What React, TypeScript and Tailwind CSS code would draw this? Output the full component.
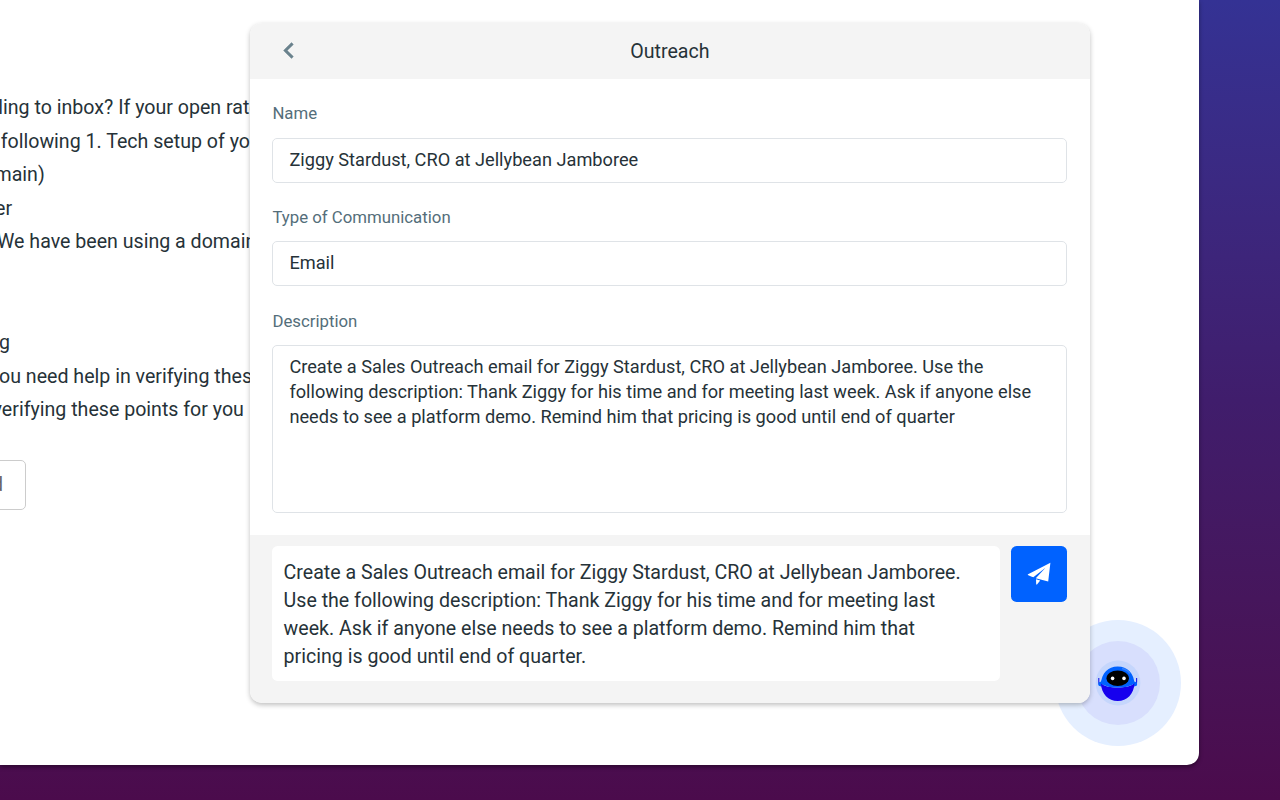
import React from 'react';

const description =
  'Create a Sales Outreach email for Ziggy Stardust, CRO at Jellybean Jamboree. Use the following description: Thank Ziggy for his time and for meeting last week. Ask if anyone else needs to see a platform demo. Remind him that pricing is good until end of quarter';

function Conversation() {
  return (
    <div className="w-[251px] shrink-0 overflow-hidden pt-[91px] text-[19.6px] leading-[33.6px] whitespace-nowrap">
      <p className="-ml-[6.5px]">lling to inbox? If your open rate</p>
      <p className="ml-[0.7px]">following 1. Tech setup of you</p>
      <p className="-ml-[5.5px]">main)</p>
      <p className="-ml-[5px]">er</p>
      <p className="-ml-[3px]">We have been using a domain</p>
      <p className="mt-[67.2px] -ml-[1px]">g</p>
      <p className="-ml-[1px]">ou need help in verifying these</p>
      <p className="-ml-[7.5px]">verifying these points for you</p>
      <div className="mt-[32.9px] -ml-[74px] flex h-[50px] w-[100px] items-center justify-end rounded-[5px] border border-[#ccc] pr-[22px] text-[#666]">
        Send
      </div>
    </div>
  );
}

function Field({ label, value }: { label: string; value: string }) {
  return (
    <div className="mb-[22.4px]">
      <label className="block h-[36.4px] text-[16.8px] leading-[25.2px] text-[#546e7a]">{label}</label>
      <div className="flex h-[44.8px] items-center rounded-[5px] border border-[#dfe3e7] px-[16px] pb-[2px] text-[18.2px]">
        {value}
      </div>
    </div>
  );
}

function SendIcon() {
  return (
    <svg viewBox="0 0 24 24" className="h-6 w-6" fill="white">
      <path d="M23.4 0.8 0.6 12.5Q1.5 13.8 6.3 15.3L18.5 5.8 8.8 16.2 21.2 19.6Z" />
      <path d="M9 17.2 13.2 18.5 10 22.4 9.2 22.4Z" />
    </svg>
  );
}

function Robot() {
  return (
    <div className="absolute top-[620.4px] left-[1054.7px] h-[126px] w-[126px]">
      <svg viewBox="0 0 126 126" className="h-full w-full">
        <circle cx="63" cy="63" r="63" fill="#e5efff" />
        <circle cx="63" cy="63" r="42" fill="#d8dffd" />
        <circle cx="63" cy="63" r="22.4" fill="#c5d6fc" />
        <path d="M43.8 58v4q0 4 4 4M81.6 58v4q0 4-4 4" fill="none" stroke="#1717e8" strokeWidth="1.1" />
        <circle cx="45.5" cy="64" r="2.3" fill="#0062ff" />
        <circle cx="79.9" cy="64" r="2.3" fill="#0062ff" />
        <path d="M45.9 64C46.4 53 53 46.4 62.7 46.4S79 53 79.5 64Z" fill="#0062ff" />
        <path d="M67 48.5q5.5 1.3 8 5" fill="none" stroke="#2f80ff" strokeWidth="1.5" />
        <path d="M45.9 63C50 69 75 69 79.5 63C79 74 72 81 62.7 81S46.4 74 45.9 63Z" fill="#1600ee" />
        <path d="M45.4 62.5C50 69.3 75 69.3 80 62.5L78 60H47Z" fill="#0062ff" />
        <ellipse cx="62.7" cy="58.3" rx="11.2" ry="7.7" fill="#000" />
        <circle cx="57.6" cy="58.4" r="1.8" fill="#fff" />
        <circle cx="69" cy="58.4" r="1.8" fill="#fff" />
      </svg>
    </div>
  );
}

export default function App() {
  return (
    <div className="relative h-[800px] w-[1280px] overflow-hidden bg-linear-to-b from-[#343294] via-[#401d6c] to-[#4b0b4c] font-[Roboto,sans-serif] text-[#263238]">
      <main className="flex h-[764.5px] w-[1198.7px] items-start rounded-br-[12px] bg-white shadow-[0_2px_4px_rgba(0,0,0,0.4)]">
        <Robot />
        <Conversation />
        <section className="relative mt-[23.4px] -ml-[1px] flex h-[679.6px] w-[839.8px] shrink-0 flex-col overflow-hidden rounded-[12px] bg-white shadow-[0_2px_5px_rgba(0,0,0,0.25)]">
          <header className="relative flex h-[55.6px] shrink-0 items-center justify-center bg-[#f4f4f4] pt-[2px] text-[19.6px]">
            <svg viewBox="0 0 11 17" className="absolute top-[19px] left-[33px] h-[17px] w-[11px]" fill="none" stroke="#6a828d" strokeWidth="3">
              <path d="M9.6 1.4 2.4 8.5l7.2 7.1" />
            </svg>
            Outreach
          </header>
          <div className="flex-1 pt-[22.4px] pr-[22.8px] pl-[22.4px]">
            <Field label="Name" value="Ziggy Stardust, CRO at Jellybean Jamboree" />
            <Field label="Type of Communication" value="Email" />
            <label className="block h-[36.4px] text-[16.8px] leading-[25.2px] text-[#546e7a]">Description</label>
            <div className="h-[168px] rounded-[5px] border border-[#dfe3e7] px-[16px] pt-[8px] text-[18.2px] leading-[25.2px]">
              {description}
            </div>
          </div>
          <footer className="flex h-[168px] shrink-0 items-start gap-[11.2px] bg-[#f4f4f4] pt-[11.2px] pr-[22.8px] pl-[22.4px]">
            <div className="h-[134.4px] flex-1 rounded-[5.6px] bg-white pt-[12.6px] pr-[30px] pl-[11.2px] text-[19.6px] leading-[28px]">
              {description}.
            </div>
            <button className="flex h-14 w-14 items-center justify-center rounded-[5.6px] bg-[#0062ff]">
              <SendIcon />
            </button>
          </footer>
        </section>
      </main>
    </div>
  );
}
